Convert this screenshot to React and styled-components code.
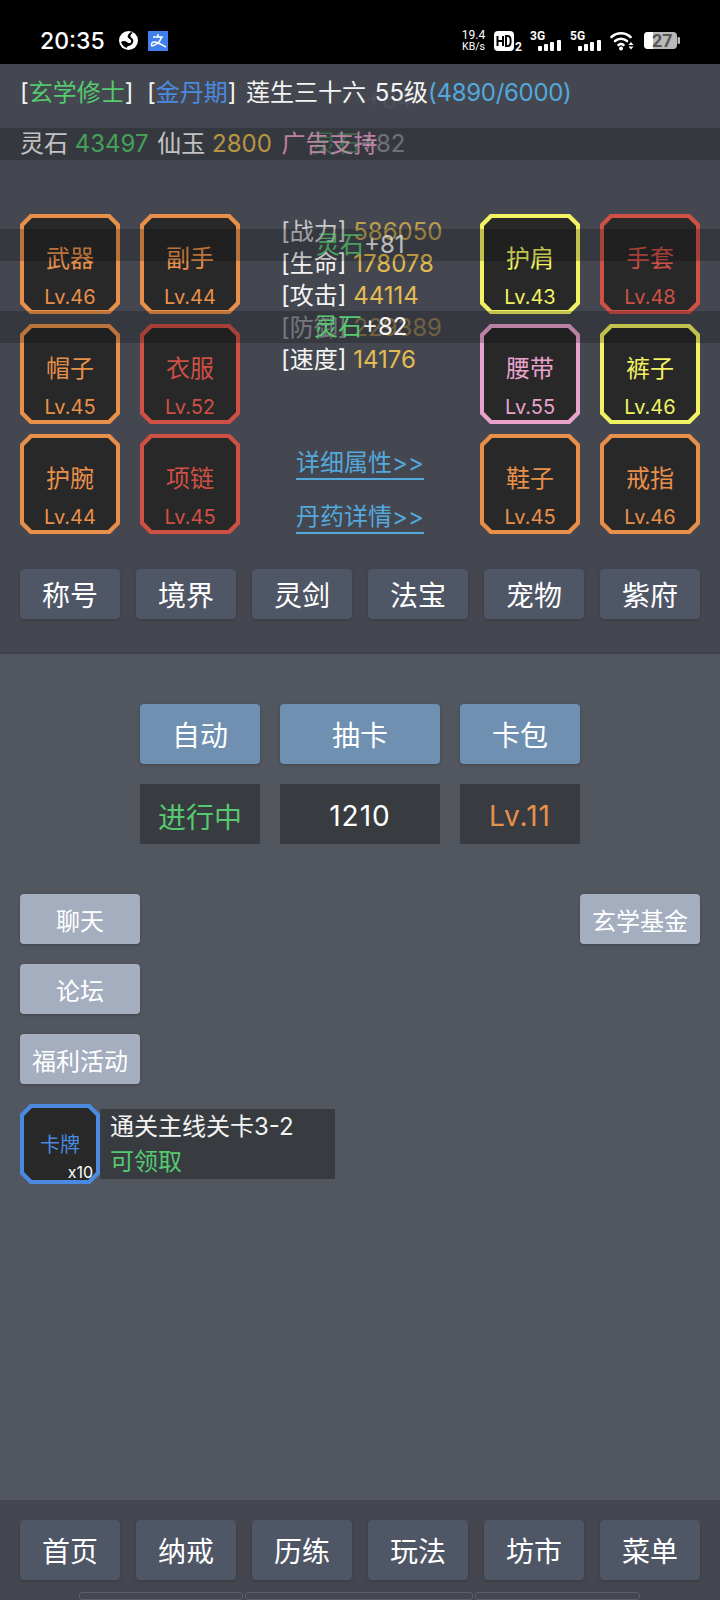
import React from "react";
import styled, { createGlobalStyle } from "styled-components";

const GlobalStyle = createGlobalStyle`
  html, body {
    margin: 0;
    padding: 0;
    background: #000;
  }
  * {
    box-sizing: border-box;
  }
`;

const colors = {
  green: "#55c96f",
  blue: "#4a8ae0",
  sky: "#53a9dc",
  gold: "#e3bb50",
  pink: "#e8a2cc",
  orange: "#e8904a",
  red: "#cf5045",
  yellow: "#f2f262",
};

const Page = styled.div`
  position: relative;
  width: 720px;
  height: 1600px;
  display: flex;
  flex-direction: column;
  overflow: hidden;
  color: #f4f4f4;
  font-family: Inter, "Noto Sans CJK SC", sans-serif;
  font-size: 24px;
  background: #51565f;
`;

const StatusBar = styled.div`
  height: 64px;
  flex: none;
  background: #000;
  display: flex;
  align-items: center;
  justify-content: space-between;
  padding: 17px 40px 0;
  color: #fff;
`;

const StatusGroup = styled.div`
  display: flex;
  align-items: center;
  gap: ${(p) => p.$gap || 8}px;
`;

const Clock = styled.span`
  font-size: 23px;
  font-weight: 500;
  margin-right: 4px;
`;

const Speed = styled.div`
  width: 25px;
  font-size: 12px;
  line-height: 11px;
  text-align: center;
  font-family: Roboto, sans-serif;
  span {
    display: block;
    font-size: 10.5px;
  }
`;

const TopPanel = styled.section`
  height: 590px;
  flex: none;
  background: #444750;
  padding: 13px 20px 0;
  box-shadow: inset 0 -1px 2px rgba(0, 0, 0, 0.1);
`;

const InfoLine = styled.div`
  height: 32px;
  line-height: 32px;
  white-space: pre;
  margin-bottom: 19px;
`;

const Tint = styled.span`
  color: ${(p) => p.$c};
`;

const PlayerName = styled.span`
  margin: 0 2px 0 -4px;
`;

const Progress = styled.span`
  color: ${colors.sky};
  letter-spacing: -0.3px;
`;

const CurrencyLabel = styled.span`
  margin-left: 2px;
`;

const AdLabel = styled.span`
  color: ${colors.pink};
  margin-left: 3px;
`;

const Equip = styled.div`
  margin-top: 54px;
  display: grid;
  grid-template-columns: 100px 100px 1fr 100px 100px;
  grid-template-rows: repeat(3, 100px);
  column-gap: 20px;
  row-gap: 10px;
`;

const Slot = styled.div`
  position: relative;
  width: ${(p) => p.$size || 100}px;
  height: ${(p) => p.$size || 100}px;
  background: ${(p) => p.$c};
  color: ${(p) => p.$c};
  clip-path: polygon(10px 0, calc(100% - 10px) 0, 100% 10px, 100% calc(100% - 10px), calc(100% - 10px) 100%, 10px 100%, 0 calc(100% - 10px), 0 10px);
  &::before {
    content: "";
    position: absolute;
    inset: 4px;
    background: #282828;
    clip-path: polygon(8px 0, calc(100% - 8px) 0, 100% 8px, 100% calc(100% - 8px), calc(100% - 8px) 100%, 8px 100%, 0 calc(100% - 8px), 0 8px);
  }
`;

const SlotName = styled.div`
  position: relative;
  padding-top: 29px;
  height: 70px;
  line-height: 32px;
  text-align: center;
`;

const SlotLevel = styled.div`
  position: relative;
  line-height: 26px;
  font-size: 20px;
  text-align: center;
`;

const Stats = styled.div`
  grid-column: 3;
  grid-row: 1 / span 2;
  padding: 2px 0 0 21px;
  line-height: 32px;
  white-space: pre;
`;

const StatRow = styled.div`
  height: 32px;
`;

const Links = styled.div`
  grid-column: 3;
  grid-row: 3;
  padding-top: 14px;
  display: flex;
  flex-direction: column;
  align-items: center;
  gap: 22px;
`;

const DetailLink = styled.a`
  color: ${colors.sky};
  line-height: 30px;
  border-bottom: 2px solid ${colors.sky};
`;

const ButtonRow = styled.div`
  margin-top: 35px;
  display: flex;
  justify-content: space-between;
`;

const NavButton = styled.button`
  width: 100px;
  height: ${(p) => p.$h || 50}px;
  border: 0;
  border-radius: 4px;
  padding: 0;
  background: #4f5666;
  color: #fff;
  font: inherit;
  font-size: 28px;
  box-shadow: 0 1px 3px rgba(0, 0, 0, 0.18);
`;

const Main = styled.main`
  flex: 1;
  padding: 50px 20px 0;
`;

const CardGrid = styled.div`
  display: grid;
  grid-template-columns: 120px 160px 120px;
  grid-auto-rows: 60px;
  gap: 20px;
  justify-content: center;
`;

const ActionButton = styled.button`
  border: 0;
  border-radius: 4px;
  padding: 0;
  background: #6f90b1;
  color: #fff;
  font: inherit;
  font-size: 28px;
  box-shadow: 0 1px 3px rgba(0, 0, 0, 0.2);
`;

const Readout = styled.div`
  background: #383b40;
  color: ${(p) => p.$c || "#fff"};
  font-size: 28px;
  letter-spacing: ${(p) => (p.$spaced ? "1px" : "0")};
  padding-top: 3px;
  display: flex;
  align-items: center;
  justify-content: center;
`;

const SideRow = styled.div`
  margin-top: 50px;
  display: flex;
  justify-content: space-between;
  align-items: flex-start;
`;

const SideColumn = styled.div`
  display: flex;
  flex-direction: column;
  gap: 20px;
`;

const SideButton = styled.button`
  width: 120px;
  height: 50px;
  border: 0;
  border-radius: 4px;
  padding: 0;
  background: #a4aebf;
  color: #fff;
  font: inherit;
  box-shadow: 0 1px 3px rgba(0, 0, 0, 0.2);
`;

const Task = styled.div`
  margin-top: 20px;
  display: flex;
  align-items: center;
`;

const RewardName = styled.div`
  position: relative;
  padding-top: 26px;
  line-height: 30px;
  font-size: 20px;
  text-align: center;
`;

const RewardCount = styled.div`
  position: absolute;
  right: 7px;
  bottom: 3px;
  color: #fff;
  font-size: 16px;
  line-height: 18px;
`;

const TaskText = styled.div`
  width: 235px;
  height: 70px;
  padding-left: 10px;
  background: #383b40;
  line-height: 35px;
`;

const BottomBar = styled.nav`
  height: 100px;
  flex: none;
  padding: 20px 20px 0;
  background: #444750;
  position: relative;
`;

const BottomRow = styled.div`
  display: flex;
  justify-content: space-between;
`;

const GestureTabs = styled.div`
  position: absolute;
  left: 79px;
  top: 92px;
  display: flex;
  gap: 2px;
`;

const GestureTab = styled.div`
  width: ${(p) => p.$w}px;
  height: 8px;
  border: 1px solid #5b5f68;
  border-radius: 3px;
`;

const Band = styled.div`
  position: absolute;
  left: 0;
  right: 0;
  top: ${(p) => p.$top}px;
  height: 32px;
  line-height: 32px;
  background: rgba(0, 0, 0, 0.2);
  white-space: pre;
`;

const BandText = styled.div`
  position: absolute;
  left: ${(p) => p.$left}px;
  top: 0;
  opacity: ${(p) => p.$o};
`;

const FadedTail = styled.div`
  position: absolute;
  left: 366px;
  top: 84px;
  line-height: 32px;
  opacity: 0.05;
`;

const stats = [
  ["战力", "586050", 0.75],
  ["生命", "178078", 1],
  ["攻击", "44114", 1],
  ["防御", "229389", 0.45],
  ["速度", "14176", 1],
];

const leftSlots = [
  ["武器", "Lv.46", colors.orange],
  ["副手", "Lv.44", colors.orange],
  ["帽子", "Lv.45", colors.orange],
  ["衣服", "Lv.52", colors.red],
  ["护腕", "Lv.44", colors.orange],
  ["项链", "Lv.45", colors.red],
];

const rightSlots = [
  ["护肩", "Lv.43", colors.yellow],
  ["手套", "Lv.48", colors.red],
  ["腰带", "Lv.55", colors.pink],
  ["裤子", "Lv.46", colors.yellow],
  ["鞋子", "Lv.45", colors.orange],
  ["戒指", "Lv.46", colors.orange],
];

const GlobeIcon = () => (
  <svg width="19" height="19" viewBox="0 0 19 19">
    <circle cx="9.5" cy="9.5" r="9.5" fill="#fff" />
    <path d="M12 1 C9 3 8 5 9 6.5 C10 8 13 8.5 12 11 C11 13 9 12 8 11 C6 9.5 3.5 9.5 2 11 C3 14 5 16 7.5 17 C8 15 10 15 11 14.5 C13.5 13.5 15 11 14 8.5 C13.5 7 11 6.5 11.5 4.5 C12 3 13 2 14 2 Z" fill="#000" />
  </svg>
);

const AlipayIcon = () => (
  <svg width="20" height="20" viewBox="0 0 20 20">
    <rect width="20" height="20" fill="#3f80ee" />
    <path d="M5 6 H15 M10 3 V6 M13.5 6 C12 11 8 14 4 15 C2.5 13 4 10.5 7 11 C10 11.5 14 14 18 16" fill="none" stroke="#fff" strokeWidth="1.5" />
  </svg>
);

const HdIcon = () => (
  <svg width="28" height="20" viewBox="0 0 28 20" overflow="visible">
    <rect width="20" height="20" rx="4" fill="#fff" />
    <path d="M3.5 5 V15 M3.5 10 H9 M9 5 V15" stroke="#000" strokeWidth="2" fill="none" />
    <path d="M12 5 V15 H14 C17.5 15 17.5 5 14 5 Z" stroke="#000" strokeWidth="2" fill="none" />
    <text x="21" y="20" fontSize="12" fontWeight="700" fill="#fff" fontFamily="Roboto, sans-serif">2</text>
  </svg>
);

const SignalIcon = ({ label }) => (
  <svg width="32" height="20" viewBox="0 0 32 20" overflow="visible">
    <text x="0" y="9" fontSize="12" fontWeight="700" fill="#fff" fontFamily="Roboto, sans-serif">{label}</text>
    <rect x="8" y="15" width="4" height="5" rx="1" fill="#fff" />
    <rect x="14" y="13" width="4" height="7" rx="1" fill="#fff" />
    <rect x="20" y="11" width="4" height="9" rx="1" fill="#fff" />
    <rect x="27" y="9" width="4" height="11" rx="1" fill="#fff" />
  </svg>
);

const WifiIcon = () => (
  <svg width="26" height="20" viewBox="0 0 26 20">
    <path d="M1.5 6 C7 1 15 1 20.5 6" fill="none" stroke="#fff" strokeWidth="2.6" strokeLinecap="round" />
    <path d="M5 10 C8.5 7 13.5 7 17 10" fill="none" stroke="#fff" strokeWidth="2.6" strokeLinecap="round" />
    <path d="M8.5 14 C10 12.8 12 12.8 13.5 14" fill="none" stroke="#fff" strokeWidth="2.6" strokeLinecap="round" />
    <circle cx="11" cy="17.5" r="2" fill="#fff" />
    <path d="M21 11 L23.5 14 H18.5 Z M18.5 15.5 H23.5 L21 18.5 Z" fill="#fff" />
  </svg>
);

const BatteryIcon = () => (
  <svg width="36" height="17" viewBox="0 0 36 17" overflow="visible">
    <rect x="0" y="0" width="33" height="17" rx="4" fill="#b9b9b9" />
    <path d="M4 0 H9 V17 H4 A4 4 0 0 1 0 13 V4 A4 4 0 0 1 4 0 Z" fill="#fff" />
    <rect x="33.5" y="5" width="2.5" height="7" rx="1" fill="#b9b9b9" />
    <text x="8" y="15" fontSize="18" fontWeight="700" fill="#555" fontFamily="Roboto, sans-serif">27</text>
  </svg>
);

const renderSlot = ([name, level, color]) => (
  <Slot key={name} $c={color}>
    <SlotName>{name}</SlotName>
    <SlotLevel>{level}</SlotLevel>
  </Slot>
);

export default function App() {
  return (
    <Page>
      <GlobalStyle />
      <StatusBar>
        <StatusGroup $gap={10}>
          <Clock>20:35</Clock>
          <GlobeIcon />
          <AlipayIcon />
        </StatusGroup>
        <StatusGroup $gap={8}>
          <Speed>
            19.4<span>KB/s</span>
          </Speed>
          <HdIcon />
          <SignalIcon label="3G" />
          <SignalIcon label="5G" />
          <WifiIcon />
          <BatteryIcon />
        </StatusGroup>
      </StatusBar>

      <TopPanel>
        <InfoLine>
          [<Tint $c={colors.green}>玄学修士</Tint>]{"  "}[<Tint $c={colors.blue}>金丹期</Tint>]{"  "}
          <PlayerName>莲生三十六</PlayerName> 55级
          <Progress>(4890/6000)</Progress>
        </InfoLine>
        <InfoLine>
          灵石 <Tint $c={colors.green}>43497</Tint> <CurrencyLabel>仙玉</CurrencyLabel> <Tint $c={colors.gold}>2800</Tint> <AdLabel>广告支持</AdLabel>
        </InfoLine>

        <Equip>
          {leftSlots.slice(0, 2).map(renderSlot)}
          <Stats>
            {stats.map(([label, value, opacity]) => (
              <StatRow key={label} style={{ opacity }}>
                [{label}] <Tint $c={colors.gold}>{value}</Tint>
              </StatRow>
            ))}
          </Stats>
          {rightSlots.slice(0, 2).map(renderSlot)}
          {leftSlots.slice(2, 4).map(renderSlot)}
          {rightSlots.slice(2, 4).map(renderSlot)}
          {leftSlots.slice(4, 6).map(renderSlot)}
          <Links>
            <DetailLink>详细属性&gt;&gt;</DetailLink>
            <DetailLink>丹药详情&gt;&gt;</DetailLink>
          </Links>
          {rightSlots.slice(4, 6).map(renderSlot)}
        </Equip>

        <ButtonRow>
          {["称号", "境界", "灵剑", "法宝", "宠物", "紫府"].map((label) => (
            <NavButton key={label}>{label}</NavButton>
          ))}
        </ButtonRow>
      </TopPanel>

      <Main>
        <CardGrid>
          <ActionButton>自动</ActionButton>
          <ActionButton>抽卡</ActionButton>
          <ActionButton>卡包</ActionButton>
          <Readout $c={colors.green}>进行中</Readout>
          <Readout $spaced>1210</Readout>
          <Readout $c={colors.orange} $spaced>Lv.11</Readout>
        </CardGrid>

        <SideRow>
          <SideColumn>
            <SideButton>聊天</SideButton>
            <SideButton>论坛</SideButton>
            <SideButton>福利活动</SideButton>
          </SideColumn>
          <SideButton>玄学基金</SideButton>
        </SideRow>

        <Task>
          <Slot $c={colors.blue} $size={80}>
            <RewardName>卡牌</RewardName>
            <RewardCount>x10</RewardCount>
          </Slot>
          <TaskText>
            通关主线关卡3-2
            <br />
            <Tint $c={colors.green}>可领取</Tint>
          </TaskText>
        </Task>
      </Main>

      <BottomBar>
        <BottomRow>
          {["首页", "纳戒", "历练", "玩法", "坊市", "菜单"].map((label) => (
            <NavButton key={label} $h={60}>{label}</NavButton>
          ))}
        </BottomRow>
        <GestureTabs>
          <GestureTab $w={164} />
          <GestureTab $w={228} />
          <GestureTab $w={165} />
        </GestureTabs>
      </BottomBar>

      <FadedTail>+84</FadedTail>
      <Band $top={128}>
        <BandText $left={312} $o={0.3}>
          <Tint $c={colors.green}>灵石</Tint>+82
        </BandText>
      </Band>
      <Band $top={229}>
        <BandText $left={316} $o={0.7}>
          <Tint $c={colors.green}>灵石</Tint>+81
        </BandText>
      </Band>
      <Band $top={311}>
        <BandText $left={314} $o={1}>
          <Tint $c={colors.green}>灵石</Tint>+82
        </BandText>
      </Band>
    </Page>
  );
}
